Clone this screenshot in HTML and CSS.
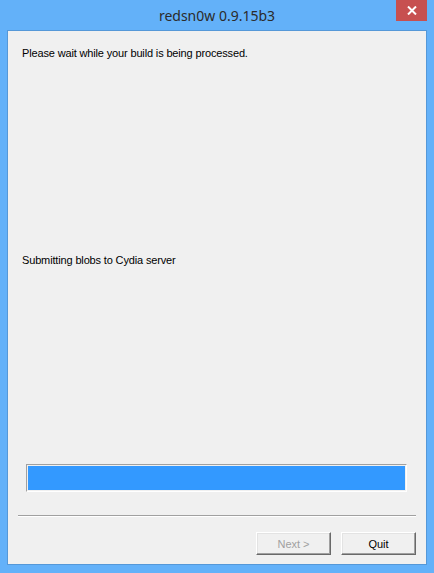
FILE: index.html
```html
<!DOCTYPE html>
<html lang="en">
<head>
    <meta charset="UTF-8">
    <title>redsn0w 0.9.15b3</title>
    <link rel="stylesheet" href="styles.css">
</head>
<body>
    <div class="window">
        <!-- Barra de titulo -->
        <div class="titlebar">
            <span class="title">redsn0w 0.9.15b3</span>
            <div class="close">
                <svg width="10" height="9" viewBox="0 0 10 9">
                    <path d="M1 0.5 L9 8.5 M9 0.5 L1 8.5" stroke="#fff" stroke-width="2" fill="none"/>
                </svg>
            </div>
        </div>

        <!-- Area do cliente -->
        <div class="client">
            <p class="message">Please wait while your build is being processed.</p>
            <p class="status">Submitting blobs to Cydia server</p>

            <div class="progress">
                <div class="progress-fill"></div>
            </div>

            <div class="separator"></div>

            <div class="buttons">
                <button class="btn" disabled>Next &gt;</button>
                <button class="btn">Quit</button>
            </div>
        </div>
    </div>
</body>
</html>
```

FILE: styles.css
```css
* {
    margin: 0;
    padding: 0;
    box-sizing: border-box;
}

body {
    width: 434px;
    height: 573px;
    overflow: hidden;
    background: #63b1f9;
}

/* Janela */
.window {
    width: 434px;
    height: 573px;
    display: flex;
    flex-direction: column;
    background: #63b1f9;
}

.titlebar {
    height: 30px;
    position: relative;
    display: flex;
    justify-content: center;
    align-items: center;
}

.title {
    font-family: "Noto Sans", sans-serif;
    font-size: 14px;
    color: #2b2b2b;
    padding-top: 1px;
}

.close {
    position: absolute;
    top: 0;
    right: 7px;
    width: 31px;
    height: 21px;
    background: #c75050;
    display: flex;
    justify-content: center;
    align-items: center;
}

/* Conteudo */
.client {
    flex: 1;
    margin: 0 7px 8px 7px;
    border: 1px solid #5598d8;
    background: #f0f0f0;
    padding: 0 10px 9px 10px;
    display: flex;
    flex-direction: column;
    font-family: "Liberation Sans", Arial, sans-serif;
    font-size: 11px;
    line-height: 13px;
    letter-spacing: -0.15px;
    color: #000;
}

.message {
    margin-top: 16px;
    padding-left: 4px;
}

.status {
    margin-top: 194px;
    padding-left: 4px;
}

.progress {
    margin: 197px 9px 0 8px;
    height: 28px;
    border: 1px solid;
    border-color: #a0a0a0 #fff #fff #a0a0a0;
    padding: 1px;
}

.progress-fill {
    height: 100%;
    background: #3399ff;
}

.separator {
    margin-top: 23px;
    height: 2px;
    border-top: 1px solid #a0a0a0;
    border-bottom: 1px solid #fff;
}

.buttons {
    margin-top: 15px;
    display: flex;
    justify-content: flex-end;
    gap: 10px;
}

.btn {
    width: 75px;
    height: 23px;
    font-family: "Liberation Sans", Arial, sans-serif;
    font-size: 11px;
    color: #000;
    background: #f0f0f0;
    border: 1px solid;
    border-color: #fff #696969 #696969 #fff;
    box-shadow: inset -1px -1px 0 #a0a0a0, inset 1px 1px 0 #e3e3e3;
}

.btn:disabled {
    color: #a0a0a0;
}
```
